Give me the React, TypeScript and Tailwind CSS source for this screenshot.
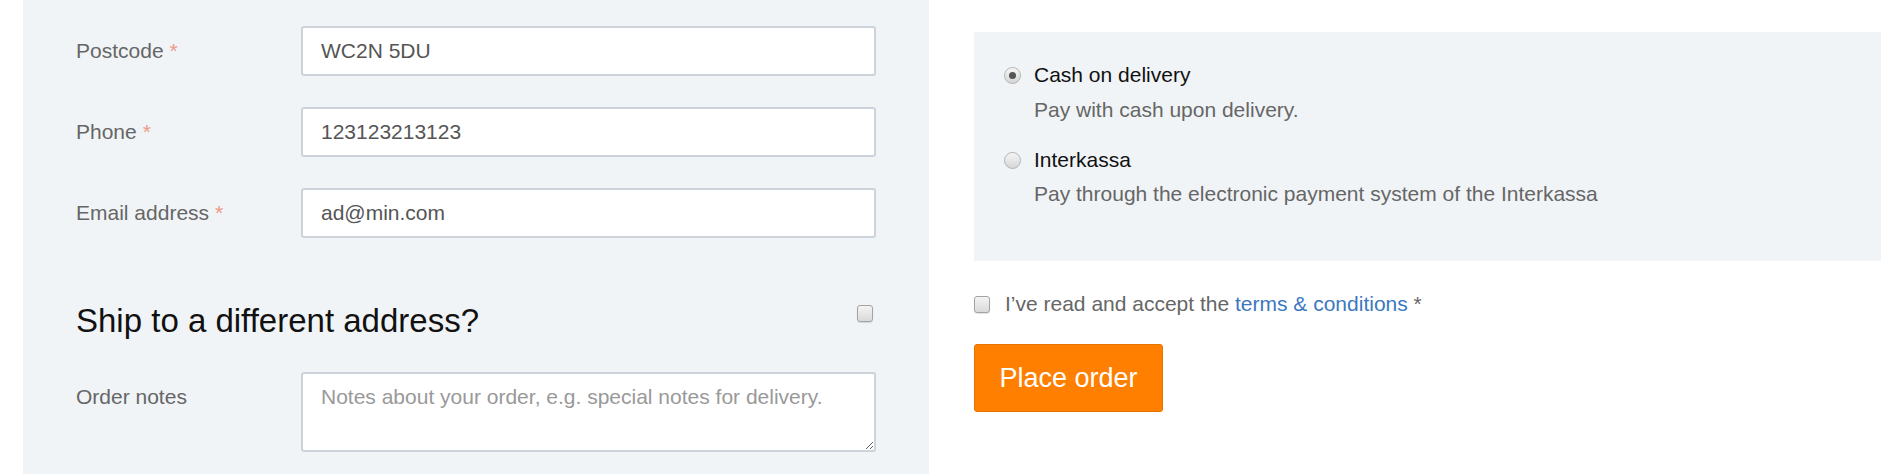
import React from 'react';

const font = { fontFamily: '"Liberation Sans", Arial, sans-serif' };

function Req() {
  return <span className="text-[#ec9a85] ml-[6px]">*</span>;
}

function Field({ label, value }: { label: string; value: string }) {
  return (
    <div className="flex items-center">
      <label className="w-[225px] text-[21px] leading-[24px] text-[#666]">
        {label}
        <Req />
      </label>
      <input
        readOnly
        value={value}
        className="w-[575px] h-[50px] bg-white border-2 border-[#cdd2db] rounded-[3px] px-[18px] text-[21px] text-[#555] outline-none"
        style={font}
      />
    </div>
  );
}

function Checkbox() {
  return (
    <span className="block w-[16px] h-[17px] rounded-[3px] border border-[#a3a3a3] bg-gradient-to-b from-[#f4f4f4] to-[#d9d9d9] shadow-[0_1px_1px_rgba(0,0,0,0.12)]" />
  );
}

function Radio({ checked }: { checked?: boolean }) {
  return (
    <span className="flex items-center justify-center w-[17px] h-[17px] rounded-full border border-[#b3b3b3] bg-gradient-to-b from-[#f6f6f6] to-[#d6d6d6]">
      {checked && <span className="block w-[7px] h-[7px] rounded-full bg-[#555]" />}
    </span>
  );
}

export default function App() {
  return (
    <div className="w-full h-[474px] overflow-hidden bg-white flex pl-[23px] pr-[19px] gap-[45px]" style={font}>
      {/* billing form */}
      <div className="w-[906px] h-full bg-[#f1f4f7] px-[53px] pt-[26px] flex flex-col">
        <div className="flex flex-col gap-[31px]">
          <Field label="Postcode" value="WC2N 5DU" />
          <Field label="Phone" value="123123213123" />
          <Field label="Email address" value="ad@min.com" />
        </div>

        <div className="mt-[63px] h-[40px] flex items-start justify-between w-[797px]">
          <h3 className="text-[33px] leading-[40px] text-[#111]">Ship to a different address?</h3>
          <span className="mt-[4px]">
            <Checkbox />
          </span>
        </div>

        <div className="mt-[31px] flex items-start">
          <label className="w-[225px] mt-[13px] text-[21px] leading-[24px] text-[#666]">Order notes</label>
          <textarea
            readOnly
            placeholder="Notes about your order, e.g. special notes for delivery."
            className="w-[575px] h-[80px] bg-white border-2 border-[#cdd2db] rounded-[3px] px-[18px] py-[11px] text-[21px] leading-[24px] text-[#555] placeholder:text-[#999] outline-none"
            style={font}
          />
        </div>
      </div>

      {/* payment */}
      <div className="w-[907px] pt-[32px] flex flex-col">
        <div className="h-[229px] bg-[#f1f4f7] pl-[30px] pt-[31px] text-[21px] leading-[24px]">
          <div className="flex items-center gap-[13px]">
            <Radio checked />
            <span className="text-[#111]">Cash on delivery</span>
          </div>
          <p className="pl-[30px] mt-[11px] text-[#666]">Pay with cash upon delivery.</p>

          <div className="flex items-center gap-[13px] mt-[26px]">
            <Radio />
            <span className="text-[#111]">Interkassa</span>
          </div>
          <p className="pl-[30px] mt-[10px] text-[#666]">Pay through the electronic payment system of the Interkassa</p>
        </div>

        <div className="mt-[31px] flex items-center gap-[15px] text-[21px] leading-[24px] text-[#666]">
          <Checkbox />
          <span>
            I’ve read and accept the <a className="text-[#3b78c0]">terms &amp; conditions</a> *
          </span>
        </div>

        <button className="mt-[28px] w-[189px] h-[68px] bg-[#ff8000] border border-[#e87400] rounded-[3px] text-white text-[27px]" style={font}>
          Place order
        </button>
      </div>
    </div>
  );
}
